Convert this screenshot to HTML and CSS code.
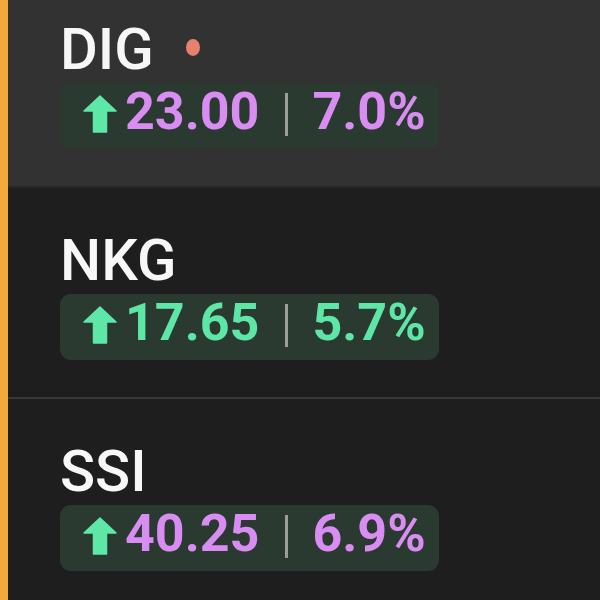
FILE: index.html
```html
<!DOCTYPE html>
<html lang="en">
<head>
    <meta charset="UTF-8">
    <meta name="viewport" content="width=device-width, initial-scale=1.0">
    <title>Watchlist</title>
    <link rel="stylesheet" href="styles.css">
</head>
<body>
    <div class="watchlist">
        <div class="row active">
            <div class="symbol">DIG <span class="dot"></span></div>
            <div class="change purple">
                <svg class="arrow" viewBox="0 0 34 38"><polygon points="17,1 33,16 23.5,16 23.5,37 10.5,37 10.5,16 1,16"/></svg>
                <span class="price">23.00</span>
                <span class="sep"></span>
                <span class="pct">7.0%</span>
            </div>
        </div>
        <div class="row">
            <div class="symbol">NKG</div>
            <div class="change green">
                <svg class="arrow" viewBox="0 0 34 38"><polygon points="17,1 33,16 23.5,16 23.5,37 10.5,37 10.5,16 1,16"/></svg>
                <span class="price">17.65</span>
                <span class="sep"></span>
                <span class="pct">5.7%</span>
            </div>
        </div>
        <div class="row">
            <div class="symbol">SSI</div>
            <div class="change purple">
                <svg class="arrow" viewBox="0 0 34 38"><polygon points="17,1 33,16 23.5,16 23.5,37 10.5,37 10.5,16 1,16"/></svg>
                <span class="price">40.25</span>
                <span class="sep"></span>
                <span class="pct">6.9%</span>
            </div>
        </div>
    </div>
</body>
</html>
```

FILE: styles.css
```css
body {
    margin: 0;
    background-color: #1e1e1e;
    font-family: Roboto, "Liberation Sans", sans-serif;
    overflow: hidden;
}
.watchlist {
    border-left: 8px solid #f2aa3c;
    margin-top: -23px;
    min-height: 640px;
}
.row {
    box-sizing: border-box;
    height: 211px;
    padding: 43px 0 0 52px;
    border-bottom: 2px solid #383838;
    background-color: #1e1e1e;
}
.row.active {
    background-color: #323232;
    border-bottom-color: #262626;
}
.symbol {
    display: flex;
    align-items: center;
    font-size: 58px;
    line-height: 58px;
    font-weight: 500;
    color: #f7f7f7;
    margin-bottom: 5px;
}
.dot {
    width: 14px;
    height: 17px;
    border-radius: 50%;
    background-color: #e8806e;
    margin-left: 32px;
    margin-top: -4px;
}
.change {
    display: inline-flex;
    align-items: flex-start;
    box-sizing: border-box;
    height: 66px;
    padding: 3px 13px 0 23px;
    border-radius: 11px;
    background-color: #2a3a31;
    font-size: 52px;
    line-height: 52px;
    font-weight: 700;
}
.arrow {
    width: 34px;
    height: 38px;
    margin-top: 9px;
    margin-right: 8px;
    fill: #5ee8a8;
    stroke: #5ee8a8;
    stroke-width: 1.5;
    stroke-linejoin: round;
}
.purple {
    color: #d98cf2;
}
.green {
    color: #5ee6a6;
}
.sep {
    width: 3px;
    height: 43px;
    margin: 7px 24px 0 26px;
    background-color: #9c9c9c;
}
```
